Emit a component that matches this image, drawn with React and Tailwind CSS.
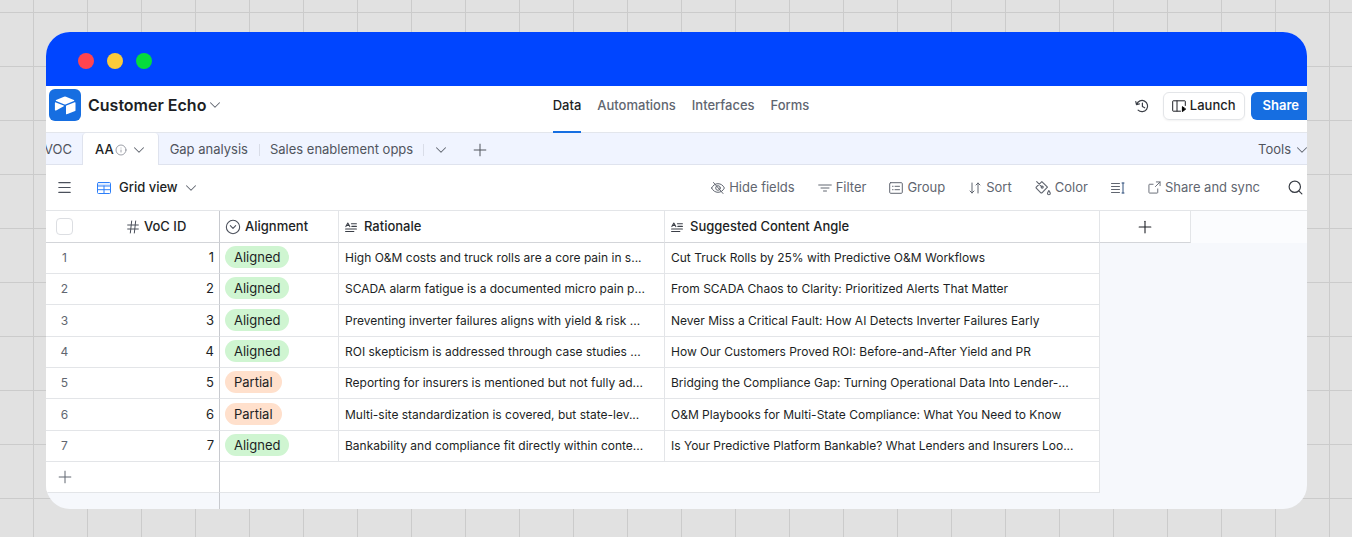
import { ChevronDown, CircleChevronDown, Hash, Info, Menu, Plus, Search } from 'lucide-react';

const ROWS = [
  { status: 'Aligned', rationale: 'High O&M costs and truck rolls are a core pain in s...', angle: 'Cut Truck Rolls by 25% with Predictive O&M Workflows' },
  { status: 'Aligned', rationale: 'SCADA alarm fatigue is a documented micro pain p...', angle: 'From SCADA Chaos to Clarity: Prioritized Alerts That Matter' },
  { status: 'Aligned', rationale: 'Preventing inverter failures aligns with yield & risk ...', angle: 'Never Miss a Critical Fault: How AI Detects Inverter Failures Early' },
  { status: 'Aligned', rationale: 'ROI skepticism is addressed through case studies ...', angle: 'How Our Customers Proved ROI: Before-and-After Yield and PR' },
  { status: 'Partial', rationale: 'Reporting for insurers is mentioned but not fully ad...', angle: 'Bridging the Compliance Gap: Turning Operational Data Into Lender-...' },
  { status: 'Partial', rationale: 'Multi-site standardization is covered, but state-lev...', angle: 'O&M Playbooks for Multi-State Compliance: What You Need to Know' },
  { status: 'Aligned', rationale: 'Bankability and compliance fit directly within conte...', angle: 'Is Your Predictive Platform Bankable? What Lenders and Insurers Loo...' },
];

const PILL = {
  Aligned: 'bg-[#cff5d1]',
  Partial: 'bg-[#ffe0cc]',
};

function Icon({ size = 14, className = '', children }) {
  return (
    <svg
      width={size}
      height={size}
      viewBox="0 0 14 14"
      fill="none"
      stroke="currentColor"
      strokeWidth="1"
      strokeLinecap="round"
      strokeLinejoin="round"
      aria-hidden="true"
      className={`shrink-0 ${className}`}
    >
      {children}
    </svg>
  );
}

const Chevron = ({ className = '' }) => (
  <ChevronDown size={18} strokeWidth={1.400} className={`shrink-0 text-[#616670] ${className}`} />
);

const HideIcon = () => (
  <Icon>
    <path d="M.6 7C2 4.200 4.300 2.700 7 2.700S12 4.200 13.400 7C12 9.800 9.700 11.300 7 11.300S2 9.800.6 7Z" />
    <circle cx="7" cy="7" r="2.300" />
    <path d="M2.500 1.500l9.500 11" />
  </Icon>
);

const FilterIcon = () => (
  <Icon>
    <path d="M.7 4h12.600M3 7h8M5.500 10h3" />
  </Icon>
);

const GroupIcon = () => (
  <Icon>
    <rect x=".7" y="1.700" width="12.600" height="10.600" rx="1" />
    <path d="M6 5.300h4.500M6 8.700h4.500M3.500 5.300h.6M3.500 8.700h.6" />
  </Icon>
);

const SortIcon = () => (
  <Icon>
    <path d="M4 2v10M2 10L4 12l2-2M10 12V2M8 4L10 2l2 2" />
  </Icon>
);

const ColorIcon = () => (
  <Icon size={16}>
    <path d="M1.500 1.500l4.300 4.300M6 1.400l4.900 4.900L6.300 11a1 1 0 0 1-1.400 0L1.300 7.400a1 1 0 0 1 0-1.400L6 1.400Z" />
    <circle cx="6.300" cy="6.200" r=".9" />
    <path d="M12.100 9.200c.8 1.200 1.300 1.900 1.300 2.500a1.200 1.200 0 0 1-2.500 0c0-.6.500-1.300 1.200-2.500Z" />
  </Icon>
);

const RowHeightIcon = () => (
  <Icon>
    <path d="M.5 2.500h8M.5 5.500h8M.5 8.500h8M.5 11.500h8" />
    <path d="M12 2v10M11 2h2M11 12h2" className="stroke-[#31507c]" />
  </Icon>
);

const SyncIcon = () => (
  <Icon size={13}>
    <path d="M5.500 3.500H1.700a.7.7 0 0 0-.7.700v8.100c0 .4.300.7.700.7h8.100c.4 0 .7-.3.700-.7V8.500M9 1h4v4M13 1L8 6" />
  </Icon>
);

const HistoryIcon = () => (
  <Icon className="text-[#3b3f47]">
    <path d="M1.700 5.300a5.600 5.600 0 1 1 1.400 5.800M.8 2.700l.7 2.900 2.900-.7M7.400 4.200v3.300l2.300 1.300" strokeWidth="1.200" />
  </Icon>
);

const LaunchIcon = () => (
  <Icon>
    <path d="M8.500 12.200H1.200a.5.500 0 0 1-.5-.5V2.300c0-.3.200-.5.500-.5h11.600c.3 0 .5.200.5.500V6.500M5 2v10" />
    <path d="M10.400 8v4.600l3-2.300Z" className="fill-black stroke-black" />
  </Icon>
);

const GridIcon = () => (
  <Icon className="text-[#2d7ff9]">
    <rect x=".5" y="1.500" width="13" height="11" rx="1" />
    <path d="M.5 5h13M.5 8.700h13M7 5v7.500" />
    <path d="M.5 2.500h13v2H.5Z" fill="currentColor" stroke="none" opacity=".2" />
  </Icon>
);

const LongTextIcon = () => (
  <Icon size={12} className="text-[#3b3f47]">
    <path d="M1 6.500L3.300 2.500l2.300 4M2 5.300h2.600M7.500 3.200h5.800M8 6.300h5.300M.7 9.300h12.600M.7 12.300h9.600" strokeWidth="1.300" />
  </Icon>
);

function Logo() {
  return (
    <span className="flex size-8 items-center justify-center rounded-md bg-[#166ee1]">
      <svg width="22" height="19" viewBox="0 0 22 19" fill="white" aria-hidden="true">
        <path d="M10 .8a2.500 2.500 0 0 1 2 0l7.900 3.200c.5.200.5.900 0 1.100l-7.900 3.100a2.700 2.700 0 0 1-2 0L2.100 5.100C1.600 4.900 1.600 4.200 2.100 4Z" />
        <path d="M12 10.200v7.600c0 .4.400.7.800.5l8.300-3.400a.6.6 0 0 0 .4-.5V6.800c0-.4-.4-.7-.8-.5L12.400 9.600a.6.6 0 0 0-.4.6Z" />
        <path d="M9.800 10.300L2.100 14.500c-.6.300-1.200 0-1.200-.5V7c0-.5.500-.8 1-.6l7.800 3.100c.4.200.4.600.1.800Z" />
      </svg>
    </span>
  );
}

function TopBar() {
  return (
    <header className="grid h-[47px] grid-cols-[1fr_auto_1fr] border-b border-[#e3e6ec] pl-[3px]">
      <div className="flex h-[38px] items-center gap-[7px]">
        <Logo />
        <button className="flex items-center text-base font-semibold">
          Customer Echo
          <Chevron />
        </button>
      </div>
      <nav className="flex gap-4 pl-1.5 text-[13px] font-medium text-[#616670]">
        <a href="#data" className="-mb-px border-b-2 border-[#166ee1] leading-[39px] text-[#1d1f25]">Data</a>
        <a href="#automations" className="leading-[39px]">Automations</a>
        <a href="#interfaces" className="leading-[39px]">Interfaces</a>
        <a href="#forms" className="leading-[39px]">Forms</a>
      </nav>
      <div className="flex h-10 items-center justify-end text-[13px] font-medium">
        <button aria-label="Base history" className="mr-3.5"><HistoryIcon /></button>
        <button className="mr-1.5 flex h-7 items-center gap-1 rounded-md border border-[#e3e5e8] px-2 shadow-xs">
          <LaunchIcon />
          Launch
        </button>
        <button className="h-7 rounded-l-md bg-[#166ee1] pr-2 pl-3 font-semibold text-white">Share</button>
      </div>
    </header>
  );
}

function TableTabs() {
  return (
    <div className="flex h-8 items-stretch bg-[#f0f4ff] text-[13px] text-[#50545d]">
      <button className="-ml-0.5 w-[38px] border-b border-[#dfe3ee] pt-0.5 text-left">VOC</button>
      <button className="flex items-center rounded-t-sm border-x border-[#dfe3ee] bg-white pt-px pr-2.5 pl-3 font-medium text-[#1d1f25]">
        AA
        <Info size={12} strokeWidth={1.500} className="ml-px text-[#7d828c]" />
        <Chevron className="ml-[3px]" />
      </button>
      <div className="flex flex-1 items-center border-b border-[#dfe3ee] pt-0.5">
        <button className="px-[11px]">Gap analysis</button>
        <span className="h-3 w-px bg-[#d9dde8]" />
        <button className="px-2.5">Sales enablement opps</button>
        <span className="h-3 w-px bg-[#d9dde8]" />
        <button aria-label="More tables" className="ml-2"><Chevron /></button>
        <button aria-label="Add table" className="ml-5"><Plus size={20} strokeWidth={1.200} /></button>
        <button className="-mr-1 ml-auto flex items-center gap-0.5">
          Tools
          <Chevron />
        </button>
      </div>
    </div>
  );
}

function ToolButton({ icon, children }) {
  return (
    <button className="flex items-center gap-1">
      {icon}
      {children}
    </button>
  );
}

function ViewBar() {
  return (
    <div className="flex h-[45px] items-center pr-[3px] pl-2.5 text-[13px] text-[#616670]">
      <button aria-label="Toggle views"><Menu size={17} strokeWidth={1.700} className="text-[#4b505b]" /></button>
      <button className="ml-6 flex items-center font-medium text-[#1d1f25]">
        <GridIcon />
        <span className="ml-2">Grid view</span>
        <Chevron className="ml-1" />
      </button>
      <div className="ml-auto flex items-center gap-[23px]">
        <ToolButton icon={<HideIcon />}>Hide fields</ToolButton>
        <ToolButton icon={<FilterIcon />}>Filter</ToolButton>
        <ToolButton icon={<GroupIcon />}>Group</ToolButton>
        <ToolButton icon={<SortIcon />}>Sort</ToolButton>
        <ToolButton icon={<ColorIcon />}>Color</ToolButton>
        <button aria-label="Row height"><RowHeightIcon /></button>
        <ToolButton icon={<SyncIcon />}>Share and sync</ToolButton>
        <button aria-label="Search" className="ml-1"><Search size={17} strokeWidth={1.700} className="text-[#3b3f47]" /></button>
      </div>
    </div>
  );
}

const HEAD = 'border-b border-[#d3d5d9] bg-white p-0 text-left font-medium';
const CELL = 'truncate border-b border-[#e3e5e8] bg-white p-0';

function RecordsTable() {
  return (
    <table className="w-full table-fixed border-separate border-spacing-0 border-t border-[#e3e5e8] text-[13px]">
      <colgroup>
        <col className="w-[72px]" />
        <col className="w-[102px]" />
        <col className="w-[119px]" />
        <col className="w-[326px]" />
        <col className="w-[435px]" />
        <col className="w-[91px]" />
        <col />
      </colgroup>
      <thead>
        <tr className="h-8">
          <th className={HEAD}>
            <input
              type="checkbox"
              aria-label="Select all records"
              className="ml-2.5 block size-[17px] appearance-none rounded-sm border border-[#dcdee2] bg-white"
            />
          </th>
          <th className={`${HEAD} border-r border-r-[#c8cacf]`}>
            <span className="flex items-center gap-[3px] pl-[7px]">
              <Hash size={16} strokeWidth={1.500} className="text-[#4b505b]" />
              VoC ID
            </span>
          </th>
          <th className={`${HEAD} border-r border-r-[#e3e5e8]`}>
            <span className="flex items-center gap-1 pl-[5px]">
              <CircleChevronDown size={16} strokeWidth={1.600} className="text-[#4b505b]" />
              Alignment
            </span>
          </th>
          <th className={`${HEAD} border-r border-r-[#e3e5e8]`}>
            <span className="flex items-center gap-[7px] pl-1.5"><LongTextIcon />Rationale</span>
          </th>
          <th className={`${HEAD} border-r border-r-[#e3e5e8]`}>
            <span className="flex items-center gap-[7px] pl-1.5"><LongTextIcon />Suggested Content Angle</span>
          </th>
          <th className={`${HEAD} border-r border-r-[#e3e5e8]`}>
            <button aria-label="Add field" className="mx-auto block"><Plus size={20} strokeWidth={1.300} /></button>
          </th>
          <td className="bg-[#fbfcfe]" />
        </tr>
      </thead>
      <tbody>
        {ROWS.map((row, i) => (
          <tr key={i} className="h-[31px] nth-[3n]:h-8">
            <td className={CELL}>
              <span className="block w-[37px] text-center text-xs text-[#616670]">{i + 1}</span>
            </td>
            <td className={`${CELL} border-r border-r-[#c8cacf]`}>
              <span className="block pr-[5px] text-right">{i + 1}</span>
            </td>
            <td className={`${CELL} border-r border-r-[#e3e5e8]`}>
              <span className={`mb-0.5 ml-[5px] block w-fit rounded-full px-[9px] leading-[22px] ${PILL[row.status]}`}>{row.status}</span>
            </td>
            <td className={`${CELL} border-r border-r-[#e3e5e8] text-xs`}><span className="pl-1.5">{row.rationale}</span></td>
            <td className={`${CELL} border-r border-r-[#e3e5e8] text-xs`}><span className="pl-1.5">{row.angle}</span></td>
            <td colSpan={2} />
          </tr>
        ))}
        <tr className="h-[31px]">
          <td className={CELL}>
            <button aria-label="Add record" className="ml-[9px] block"><Plus size={20} strokeWidth={1.200} className="text-[#616670]" /></button>
          </td>
          <td className={`${CELL} border-r border-r-[#c8cacf]`} />
          <td colSpan={3} className={`${CELL} border-r border-r-[#e3e5e8]`} />
          <td colSpan={2} />
        </tr>
        <tr className="h-4">
          <td />
          <td className="border-r border-r-[#c8cacf]" />
          <td colSpan={5} />
        </tr>
      </tbody>
    </table>
  );
}

export default function App() {
  return (
    <div className="min-h-screen bg-[#e1e1e1] bg-[linear-gradient(to_right,#cbcbcb_1px,transparent_1px),linear-gradient(to_bottom,#cbcbcb_1px,transparent_1px)] bg-[size:54px_54px] bg-[position:33px_12px] pt-8 pr-[45px] pb-7 pl-[46px] font-['Inter',sans-serif] text-[#1d1f25]">
      <div className="overflow-hidden rounded-3xl bg-[#f6f8fc]">
        <div className="flex h-[54px] items-center gap-[13px] bg-[#0045ff] pt-[3px] pl-8">
          <span className="size-4 rounded-full bg-[#ff444f]" />
          <span className="size-4 rounded-full bg-[#fbcb3a]" />
          <span className="size-4 rounded-full bg-[#05dc3c]" />
        </div>
        <div className="bg-white">
          <TopBar />
          <TableTabs />
          <ViewBar />
        </div>
        <RecordsTable />
      </div>
    </div>
  );
}
